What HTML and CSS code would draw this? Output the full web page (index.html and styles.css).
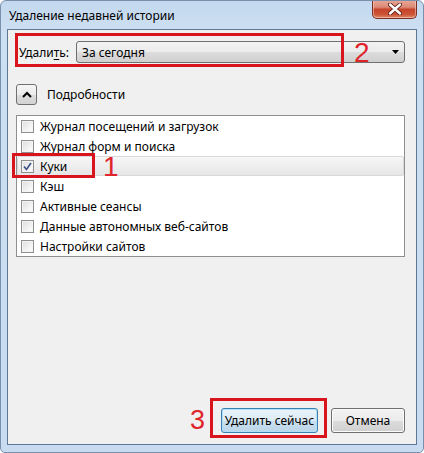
FILE: index.html
```html
<!DOCTYPE html>
<html lang="ru">
<head>
<meta charset="utf-8">
<title>Удаление недавней истории</title>
<link rel="stylesheet" href="styles.css">
</head>
<body>
<div class="window">
  <div class="titlebar">
    <span class="title">Удаление недавней истории</span>
    <div class="close">
      <svg width="14" height="12" viewBox="0 0 14 12">
        <path d="M2 1.5 L12 10.5 M12 1.5 L2 10.5" stroke="#5a1a12" stroke-width="4.2" stroke-linecap="round"/>
        <path d="M2 1.5 L12 10.5 M12 1.5 L2 10.5" stroke="#ffffff" stroke-width="2.4" stroke-linecap="round"/>
      </svg>
    </div>
  </div>
  <div class="client">
    <div class="range-row">
      <span class="range-label">Удали<u>т</u>ь:</span>
      <div class="select">
        <span class="select-text">За сегодня</span>
        <svg class="select-arrow" width="7" height="4" viewBox="0 0 7 4"><path d="M0 0 H7 L3.5 4 Z" fill="#000"/></svg>
      </div>
    </div>
    <div class="details-row">
      <div class="toggle">
        <svg width="10" height="7" viewBox="0 0 10 7"><path d="M1 6 L5 2 L9 6" fill="none" stroke="#000" stroke-width="2"/></svg>
      </div>
      <span class="details-label">Подробности</span>
    </div>
    <div class="list">
      <div class="item"><span class="cb"></span><span>Журнал посещений и загрузок</span></div>
      <div class="item"><span class="cb"></span><span>Журнал форм и поиска</span></div>
      <div class="item selected"><span class="cb checked"><svg width="9" height="9" viewBox="0 0 9 9"><path d="M1 4.5 L3.5 7.5 L8 1" fill="none" stroke="#3b4f86" stroke-width="1.6"/></svg></span><span>Куки</span></div>
      <div class="item"><span class="cb"></span><span>Кэш</span></div>
      <div class="item"><span class="cb"></span><span>Активные сеансы</span></div>
      <div class="item"><span class="cb"></span><span>Данные автономных веб-сайтов</span></div>
      <div class="item"><span class="cb"></span><span>Настройки сайтов</span></div>
    </div>
    <div class="spacer"></div>
    <div class="buttons">
      <div class="btn btn-default">Удалить сейчас</div>
      <div class="btn btn-cancel">Отмена</div>
    </div>
  </div>
  <div class="mark mark-2"></div>
  <div class="mark mark-1"></div>
  <div class="mark mark-3"></div>
  <span class="digit digit-2">2</span>
  <span class="digit digit-1">1</span>
  <span class="digit digit-3">3</span>
</div>
</body>
</html>
```
FILE: styles.css
```css
html, body {
  margin: 0;
  padding: 0;
  background: #ffffff;
}
body {
  font-family: "Noto Sans", "Open Sans", sans-serif;
  font-size: 12px;
  color: #000;
}
.window {
  position: relative;
  width: 424px;
  height: 453px;
  box-sizing: border-box;
  border: 1px solid #7890ab;
  border-radius: 6px 6px 5px 5px;
  background: linear-gradient(to bottom, #c3d8ee 0px, #cddff2 30px, #c8dbf0 100%);
  display: flex;
  flex-direction: column;
  overflow: hidden;
}
.titlebar {
  height: 28px;
  display: flex;
  justify-content: space-between;
  align-items: flex-start;
  flex: 0 0 auto;
}
.title {
  margin-left: 8px;
  margin-top: 6px;
  font-size: 12px;
  color: #000;
}
.close {
  width: 45px;
  height: 19px;
  margin-right: 6px;
  margin-top: -1px;
  box-sizing: border-box;
  border: 1px solid #7a2e24;
  border-top: none;
  border-radius: 0 0 5px 5px;
  background: linear-gradient(to bottom, #e9a898 0%, #dc8a76 40%, #c7442c 52%, #cc5437 80%, #df8a6a 100%);
  box-shadow: inset 0 0 0 1px rgba(255, 220, 210, 0.5);
  display: flex;
  align-items: center;
  justify-content: center;
}
.client {
  flex: 1 1 auto;
  margin: 0 6px 7px 6px;
  border: 1px solid #5e7896;
  background: #f0f0f0;
  padding: 11px 11px 11px 8px;
  display: flex;
  flex-direction: column;
}
.range-row {
  display: flex;
  align-items: center;
  height: 22px;
}
.range-label {
  flex: 0 0 60px;
  box-sizing: border-box;
  padding-left: 3px;
}
.range-label u {
  text-decoration-thickness: 1px;
  text-underline-offset: 2px;
}
.select {
  flex: 1 1 auto;
  height: 22px;
  box-sizing: border-box;
  border: 1px solid #707070;
  border-radius: 3px;
  background: linear-gradient(to bottom, #f2f2f2 0%, #ebebeb 50%, #dddddd 51%, #cfcfcf 100%);
  display: flex;
  align-items: center;
  justify-content: space-between;
  padding: 0 5px 0 5px;
}
.select-arrow {
  display: block;
}
.details-row {
  display: flex;
  align-items: center;
  margin-top: 21px;
  height: 21px;
}
.toggle {
  width: 21px;
  height: 21px;
  box-sizing: border-box;
  border: 1px solid #707070;
  border-radius: 3px;
  background: linear-gradient(to bottom, #f6f6f6 0%, #ebebeb 50%, #dddddd 51%, #d3d3d3 100%);
  display: flex;
  align-items: center;
  justify-content: center;
}
.toggle svg {
  display: block;
}
.details-label {
  margin-left: 10px;
}
.list {
  margin-top: 10px;
  height: 142px;
  box-sizing: border-box;
  border: 1px solid #8e8f8f;
  background: #ffffff;
  display: flex;
  flex-direction: column;
}
.item {
  height: 20px;
  box-sizing: border-box;
  display: flex;
  align-items: center;
  padding-left: 4px;
  gap: 6px;
}
.item.selected {
  border: 1px solid #d9d9d9;
  border-radius: 2px;
  background: linear-gradient(to bottom, #f7f7f7 0%, #e6e6e6 100%);
  padding-left: 3px;
}
.cb {
  width: 13px;
  height: 13px;
  box-sizing: border-box;
  border: 1px solid #8f8f8f;
  background: linear-gradient(135deg, #dcdcdc 0%, #f2f2f2 60%, #ffffff 100%);
  box-shadow: inset 0 0 0 1px #f4f4f4;
  display: flex;
  align-items: center;
  justify-content: center;
  flex: 0 0 auto;
}
.cb svg {
  display: block;
}
.spacer {
  flex: 1 1 auto;
}
.buttons {
  display: flex;
  justify-content: flex-end;
  gap: 13px;
}
.btn {
  height: 25px;
  box-sizing: border-box;
  border-radius: 3px;
  display: flex;
  align-items: center;
  justify-content: center;
}
.btn-default {
  width: 97px;
  border: 1px solid #3c7fb1;
  background: linear-gradient(to bottom, #eaf3f9 0%, #dcebf5 50%, #c9e0ef 51%, #bcd6e8 100%);
  box-shadow: inset 0 0 0 1px #aee0f7;
}
.btn-cancel {
  width: 74px;
  border: 1px solid #707070;
  background: linear-gradient(to bottom, #f2f2f2 0%, #ebebeb 50%, #dddddd 51%, #cfcfcf 100%);
  box-shadow: inset 0 0 0 1px #fbfbfb;
}
.mark {
  position: absolute;
  box-sizing: border-box;
  border: 3px solid #d8141c;
}
.mark-2 {
  left: 14px;
  top: 32px;
  width: 329px;
  height: 34px;
}
.mark-1 {
  left: 11px;
  top: 152px;
  width: 83px;
  height: 25px;
}
.mark-3 {
  left: 209px;
  top: 397px;
  width: 117px;
  height: 40px;
}
.digit {
  position: absolute;
  font-family: "Liberation Sans", Arial, sans-serif;
  font-size: 28px;
  line-height: 20px;
  color: #e0242b;
}
.digit-2 {
  left: 353px;
  top: 42px;
}
.digit-1 {
  left: 102px;
  top: 156px;
}
.digit-3 {
  left: 189px;
  top: 409px;
  font-size: 27px;
}
```
